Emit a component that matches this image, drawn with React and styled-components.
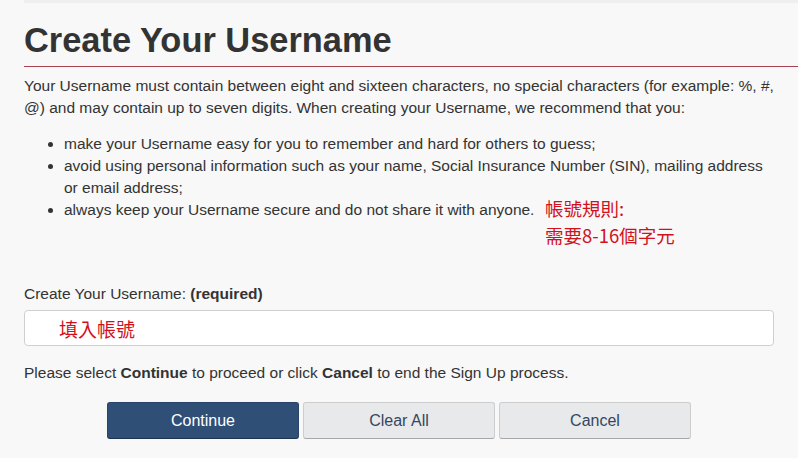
import React from "react";
import styled, { createGlobalStyle } from "styled-components";

const GlobalStyle = createGlobalStyle`
    html, body {
        margin: 0;
        padding: 0;
        background: #f8f8f8;
    }
    body {
        font-family: "Liberation Sans", Arial, sans-serif;
        color: #333;
    }
`;

const Page = styled.div`
    position: relative;
    width: 798px;
    height: 458px;
    overflow: hidden;
    padding-left: 24px;
    box-sizing: border-box;
`;

const TopBar = styled.div`
    height: 3px;
    background: #efefef;
`;

const Heading = styled.h1`
    margin: 0;
    padding: 17px 0 6px;
    font-size: 34.4px;
    line-height: 40px;
    font-weight: bold;
    color: #333;
    border-bottom: 1px solid #a8424f;
`;

const Body = styled.div`
    padding-right: 24px;
`;

const Text = styled.p`
    margin: ${(props) => props.margin || "0"};
    font-size: 15.5px;
    line-height: 22px;
    color: #333;
`;

const List = styled.ul`
    margin: 14px 0 0;
    padding-left: 40px;
    font-size: 15.5px;
    line-height: 22px;
    color: #333;
`;

const Note = styled.div`
    position: absolute;
    left: 545px;
    top: 195px;
    font-family: "Noto Sans CJK TC", sans-serif;
    font-size: 18.5px;
    line-height: 27px;
    color: #d2111e;
`;

const NoteLine = styled.div`
    height: 27px;
`;

const Label = styled.label`
    display: block;
    margin-top: 62px;
    font-size: 15.5px;
    line-height: 22px;
`;

const Field = styled.div`
    margin-top: 5px;
    height: 36px;
    box-sizing: border-box;
    border: 1px solid #cfcfcf;
    border-radius: 4px;
    background: #fff;
    padding-left: 34px;
    display: flex;
    align-items: center;
    font-family: "Noto Sans CJK TC", sans-serif;
    font-size: 19px;
    color: #d2111e;
`;

const Buttons = styled.div`
    display: flex;
    justify-content: center;
    gap: 4px;
    margin: 18px 0 0 -24px;
`;

const Button = styled.button`
    width: 192px;
    height: 37px;
    border-radius: 3px;
    font-family: "Liberation Sans", Arial, sans-serif;
    font-size: 16px;
    cursor: pointer;
    border: 1px solid ${(props) => (props.primary ? "#284469" : "#cdcdcd")};
    border-bottom-color: ${(props) => (props.primary ? "#1d3350" : "#a8a8a8")};
    background: ${(props) => (props.primary ? "#2f4f76" : "#e8e9eb")};
    color: ${(props) => (props.primary ? "#fff" : "#35465f")};
`;

const App = () => {
    return (
        <>
            <GlobalStyle />
            <Page>
                <TopBar />
                <Heading>Create Your Username</Heading>
                <Body>
                    <Text margin="8px 0 0">
                        Your Username must contain between eight and sixteen
                        characters, no special characters (for example: %, #,
                        @) and may contain up to seven digits. When creating
                        your Username, we recommend that you:
                    </Text>
                    <List>
                        <li>
                            make your Username easy for you to remember and
                            hard for others to guess;
                        </li>
                        <li>
                            avoid using personal information such as your name,
                            Social Insurance Number (SIN), mailing address or
                            email address;
                        </li>
                        <li>
                            always keep your Username secure and do not share
                            it with anyone.
                        </li>
                    </List>
                    <Label>
                        Create Your Username: <b>(required)</b>
                    </Label>
                    <Field>填入帳號</Field>
                    <Text margin="16px 0 0">
                        Please select <b>Continue</b> to proceed or click{" "}
                        <b>Cancel</b> to end the Sign Up process.
                    </Text>
                </Body>
                <Buttons>
                    <Button primary>Continue</Button>
                    <Button>Clear All</Button>
                    <Button>Cancel</Button>
                </Buttons>
                <Note>
                    <NoteLine>帳號規則:</NoteLine>
                    <NoteLine>需要8-16個字元</NoteLine>
                </Note>
            </Page>
        </>
    );
};

export default App;
